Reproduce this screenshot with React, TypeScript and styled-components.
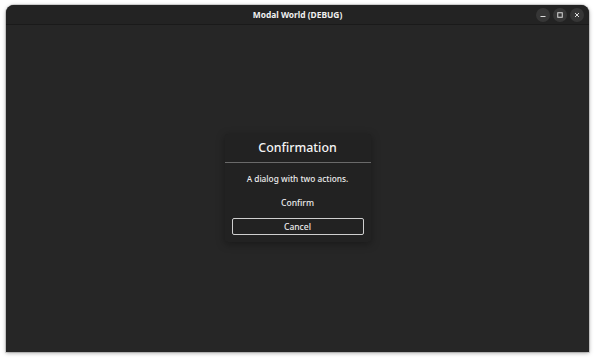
import React from "react";
import styled, { createGlobalStyle } from "styled-components";

const Global = createGlobalStyle`
  html, body { margin: 0; padding: 0; background: #ffffff; }
  body { width: 595px; height: 360px; overflow: hidden; font-family: "Noto Sans", "Open Sans", sans-serif; }
`;

const Screen = styled.div`
  width: 595px;
  height: 360px;
  padding: 5px 6px 8px 6px;
  box-sizing: border-box;
`;

const Window = styled.div`
  width: 583px;
  height: 347px;
  display: flex;
  flex-direction: column;
  border-radius: 8px 8px 0 0;
  overflow: hidden;
  background: #262626;
  box-shadow: 0 1px 4px rgba(0, 0, 0, 0.35), 0 0 0 1px rgba(0, 0, 0, 0.12);
`;

const TitleBar = styled.div`
  height: 19px;
  flex: none;
  display: grid;
  grid-template-columns: 1fr auto 1fr;
  align-items: center;
  background: #232323;
  border-bottom: 1px solid #1a1a1a;
  padding: 0 5px;
`;

const Title = styled.div`
  grid-column: 2;
  color: #f0f0f0;
  font-size: 8.4px;
  font-weight: 700;
`;

const Controls = styled.div`
  grid-column: 3;
  justify-self: end;
  display: flex;
  gap: 3px;
  align-items: center;
`;

const CtrlButton = styled.div`
  width: 14px;
  height: 14px;
  border-radius: 50%;
  background: #363636;
  display: flex;
  align-items: center;
  justify-content: center;
`;

const Body = styled.div`
  flex: 1;
  display: flex;
  align-items: center;
  justify-content: center;
  padding-bottom: 2px;
`;

const Dialog = styled.div`
  width: 146px;
  background: #222222;
  border-radius: 3px;
  box-shadow: 0 2px 8px rgba(0, 0, 0, 0.35);
  display: flex;
  flex-direction: column;
  align-items: stretch;
  padding-bottom: 7px;
`;

const DialogTitle = styled.div`
  color: #f4f4f4;
  font-size: 12.4px;
  font-weight: 500;
  text-align: center;
  height: 28px;
  line-height: 27px;
  border-bottom: 1px solid #6a6a6a;
`;

const Message = styled.div`
  color: #ececec;
  font-size: 8.3px;
  font-weight: 500;
  text-align: center;
  margin-top: 10px;
  line-height: 12px;
`;

const ActionButton = styled.div<{ $outlined?: boolean }>`
  margin: 0 7px;
  height: 17px;
  box-sizing: border-box;
  display: flex;
  align-items: center;
  justify-content: center;
  color: #ececec;
  font-size: 8.5px;
  font-weight: 500;
  border-radius: 2px;
  border: 1px solid ${(p) => (p.$outlined ? "#cfcfcf" : "transparent")};
`;

const Actions = styled.div`
  display: flex;
  flex-direction: column;
  gap: 6.5px;
  margin-top: 9.5px;
`;

export default function App() {
  return (
    <>
      <Global />
      <Screen>
        <Window>
          <TitleBar>
            <Title>Modal World (DEBUG)</Title>
            <Controls>
              <CtrlButton>
                <svg width="8" height="8" viewBox="0 0 8 8">
                  <rect x="1.5" y="5" width="5" height="1" fill="#dcdcdc" />
                </svg>
              </CtrlButton>
              <CtrlButton>
                <svg width="8" height="8" viewBox="0 0 8 8">
                  <rect x="1.75" y="1.75" width="4.5" height="4.5" fill="none" stroke="#dcdcdc" strokeWidth="1" />
                </svg>
              </CtrlButton>
              <CtrlButton>
                <svg width="8" height="8" viewBox="0 0 8 8">
                  <path d="M2 2 L6 6 M6 2 L2 6" stroke="#dcdcdc" strokeWidth="1" />
                </svg>
              </CtrlButton>
            </Controls>
          </TitleBar>
          <Body>
            <Dialog>
              <DialogTitle>Confirmation</DialogTitle>
              <Message>A dialog with two actions.</Message>
              <Actions>
                <ActionButton>Confirm</ActionButton>
                <ActionButton $outlined>Cancel</ActionButton>
              </Actions>
            </Dialog>
          </Body>
        </Window>
      </Screen>
    </>
  );
}
